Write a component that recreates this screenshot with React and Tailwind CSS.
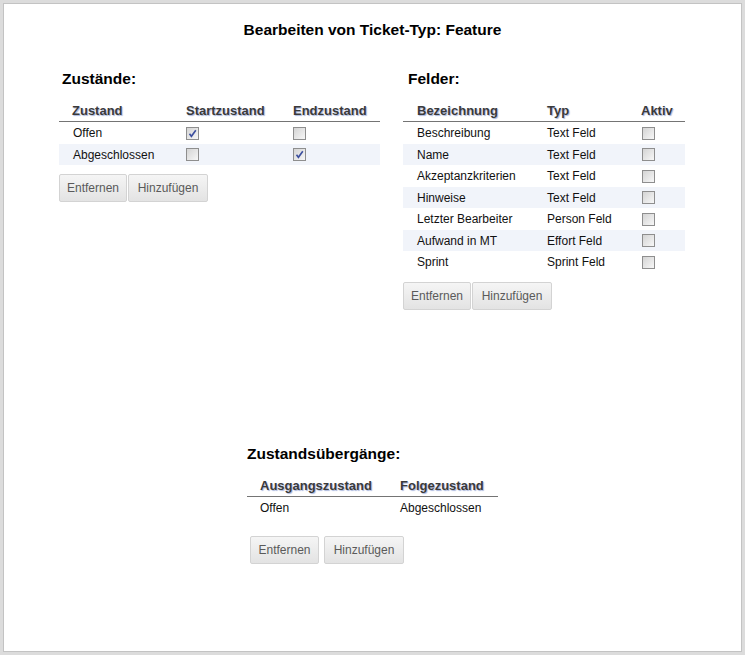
const zustaende = [
  { name: 'Offen', start: true, end: false },
  { name: 'Abgeschlossen', start: false, end: true },
];

const felder = [
  ['Beschreibung', 'Text Feld'],
  ['Name', 'Text Feld'],
  ['Akzeptanzkriterien', 'Text Feld'],
  ['Hinweise', 'Text Feld'],
  ['Letzter Bearbeiter', 'Person Feld'],
  ['Aufwand in MT', 'Effort Feld'],
  ['Sprint', 'Sprint Feld'],
];

function Checkbox({ checked }) {
  return (
    <span className="flex h-[13px] w-[13px] items-center justify-center border border-[#8e8e8e] bg-gradient-to-br from-[#d4d4d4] to-[#f7f7f7]">
      {checked && (
        <svg width="9" height="9" viewBox="0 0 9 9">
          <path d="M1.5 4.8 L3.4 7.3 L7.8 1.2" fill="none" stroke="#3c4f9e" strokeWidth="1.6" />
        </svg>
      )}
    </span>
  );
}

function Button({ children, className = '' }) {
  return (
    <button className={`h-[28px] rounded-[2px] border border-[#d3d3d3] bg-gradient-to-b from-[#f5f5f5] to-[#e3e3e3] text-[12px] text-[#5a5a5a] ${className}`}>
      {children}
    </button>
  );
}

const th = 'pl-[13px] text-[13px] font-bold leading-[15px] text-[#3a3a3a] [text-shadow:1px_1px_1px_#a9b6dc]';

function HeaderRow({ children }) {
  return <div className="flex h-[24px] border-b border-[#747474] pt-[5px]">{children}</div>;
}

function Row({ striped, children }) {
  return (
    <div className={`flex h-[21.5px] items-center pt-[1px] text-[12px] leading-[14px] text-[#111] ${striped ? 'bg-[#f1f4fa]' : ''}`}>
      {children}
    </div>
  );
}

export default function App() {
  return (
    <div className="min-h-screen bg-[#dcdcdc] p-[3px] font-['Liberation_Sans',Arial,sans-serif]">
      <div className="h-[649px] border border-[#c3c3c3] bg-white">
        <h1 className="pt-[17px] text-center text-[15.5px] font-bold leading-[17px] text-black">
          Bearbeiten von Ticket-Typ: Feature
        </h1>

        <div className="mt-[32px] flex pl-[55px]">
          <div className="w-[321px]">
            <h2 className="pl-[3px] text-[15.5px] font-bold leading-[17px] text-black">Zustände:</h2>
            <div className="mt-[11px]">
              <HeaderRow>
                <div className={`w-[114px] ${th}`}>Zustand</div>
                <div className={`w-[107px] ${th}`}>Startzustand</div>
                <div className={`flex-1 ${th}`}>Endzustand</div>
              </HeaderRow>
              {zustaende.map((z, i) => (
                <Row key={z.name} striped={i % 2 === 1}>
                  <div className="w-[114px] pl-[14px]">{z.name}</div>
                  <div className="w-[107px] pl-[13px]"><Checkbox checked={z.start} /></div>
                  <div className="flex-1 pl-[13px]"><Checkbox checked={z.end} /></div>
                </Row>
              ))}
            </div>
            <div className="mt-[9px] flex">
              <Button className="w-[68px]">Entfernen</Button>
              <Button className="ml-[1px] w-[80px]">Hinzufügen</Button>
            </div>
          </div>

          <div className="ml-[23px] w-[282px]">
            <h2 className="pl-[5px] text-[15.5px] font-bold leading-[17px] text-black">Felder:</h2>
            <div className="mt-[11px]">
              <HeaderRow>
                <div className={`w-[130px] pl-[14px] ${th}`}>Bezeichnung</div>
                <div className={`w-[94px] pl-[14px] ${th}`}>Typ</div>
                <div className={`flex-1 pl-[14px] ${th}`}>Aktiv</div>
              </HeaderRow>
              {felder.map(([name, typ], i) => (
                <Row key={name} striped={i % 2 === 1}>
                  <div className="w-[130px] pl-[14px]">{name}</div>
                  <div className="w-[94px] pl-[14px]">{typ}</div>
                  <div className="flex-1 pl-[15px]"><Checkbox /></div>
                </Row>
              ))}
            </div>
            <div className="mt-[9px] flex">
              <Button className="w-[68px]">Entfernen</Button>
              <Button className="ml-[1px] w-[80px]">Hinzufügen</Button>
            </div>
          </div>
        </div>

        <div className="mx-auto mt-[135px] w-[251px]">
          <h2 className="text-[15.5px] font-bold leading-[17px] text-black">Zustandsübergänge:</h2>
          <div className="mt-[11px]">
            <HeaderRow>
              <div className={`w-[140px] ${th}`}>Ausgangszustand</div>
              <div className={`flex-1 ${th}`}>Folgezustand</div>
            </HeaderRow>
            <Row>
              <div className="w-[140px] pl-[13px]">Offen</div>
              <div className="flex-1 pl-[13px]">Abgeschlossen</div>
            </Row>
          </div>
          <div className="mt-[18px] flex pl-[3px]">
            <Button className="w-[69px]">Entfernen</Button>
            <Button className="ml-[5px] w-[80px]">Hinzufügen</Button>
          </div>
        </div>
      </div>
    </div>
  );
}
